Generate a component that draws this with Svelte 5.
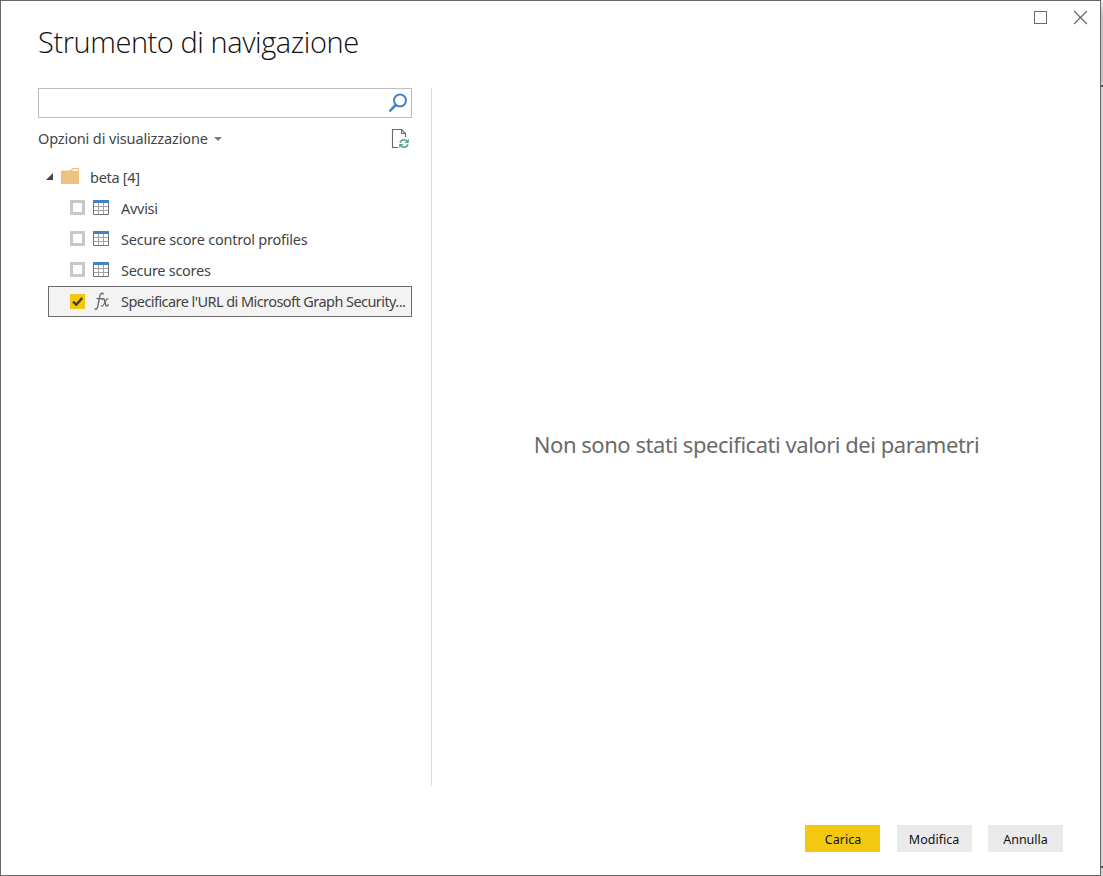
<script>
  let tables = $state([
    { name: 'Avvisi', cls: 'avvisi' },
    { name: 'Secure score control profiles', cls: 'profiles' },
    { name: 'Secure scores', cls: 'scores' }
  ]);
</script>

<div class="screen">
  <main class="dialog">
    <div class="titlebar">
      <h1>Strumento di navigazione</h1>
      <div class="window-buttons">
        <svg width="13" height="13" viewBox="0 0 13 13"><rect x=".5" y=".5" width="12" height="12" fill="none" stroke="#6b6b6b" /></svg>
        <svg width="15" height="15" viewBox="0 0 15 15"><path d="M1 1L14 14M14 1L1 14" fill="none" stroke="#666" stroke-width="1.1" /></svg>
      </div>
    </div>

    <div class="body">
      <section class="navigator">
        <div class="search">
          <svg width="20" height="20" viewBox="0 0 20 20" fill="none" stroke="#4682bd">
            <circle cx="12" cy="7.5" r="6" stroke-width="2" />
            <path d="M7.8 12L2.2 17.6" stroke-width="2.6" stroke-linecap="round" />
          </svg>
        </div>
        <div class="options">
          <span class="label">Opzioni di visualizzazione</span>
          <svg class="caret" width="8" height="4" viewBox="0 0 8 4"><path d="M0 0H8L4 4Z" fill="#777" /></svg>
          <svg class="refresh" width="18" height="20" viewBox="0 0 18 20" fill="none">
            <path d="M7 18.5H1.5V.5H10.5L14.5 4.5V8M10.5 .5V4.5H14.5" stroke="#6a6a6a" stroke-width="1.1" />
            <g stroke="#5aa384" stroke-width="1.7">
              <path d="M9 13.7A4 4 0 0 1 16 12.3" />
              <path d="M17 15.3A4 4 0 0 1 10 16.7" />
            </g>
            <path d="M17.8 9.7V14H13.5ZM8.2 19.3V15H12.5Z" fill="#5aa384" />
          </svg>
        </div>

        <div class="tree">
          <div class="row folder">
            <svg class="expander" width="7" height="7" viewBox="0 0 7 7"><path d="M7 0V7H0Z" fill="#444" /></svg>
            <svg class="folder-icon" width="18" height="16" viewBox="0 0 18 16">
              <path d="M0 2.5H9L11.5 0H18V16H0Z" fill="#eac282" />
              <path d="M10.8 2.7L12.2 1.2H17V2.7Z" fill="#fff" />
            </svg>
            <span class="label beta">beta [4]</span>
          </div>
          {#each tables as table}
            <div class="row">
              <span class="check"></span>
              <svg class="icon" width="16" height="15" viewBox="0 0 16 15">
                <path d="M1 6.5H15M1 10.5H15M5.5 3V14M10.5 3V14" stroke="#a3a3a3" fill="none" />
                <path d="M.5 2V14.5H15.5V2" stroke="#707070" fill="none" />
                <path d="M0 0H16V3H0Z" fill="#4682bd" />
              </svg>
              <span class="label {table.cls}">{table.name}</span>
            </div>
          {/each}
          <div class="row selected">
            <span class="check checked">
              <svg width="15" height="15" viewBox="0 0 15 15"><path d="M3 7.6L6.3 10.7L12.2 4" fill="none" stroke="#413a22" stroke-width="2.3" /></svg>
            </span>
            <svg class="icon fx" width="16" height="19" viewBox="0 0 16 19" fill="none" stroke="#6b6b6b" stroke-linecap="round">
              <path d="M9.2 2.1C8.7 .9 7.2 1 6.4 2.5C5.4 4.5 4.6 11.5 3.6 15C3.1 17 2 17.8 1.1 17" stroke-width="1.4" />
              <path d="M2.8 6.6H8.2" stroke-width="1.1" />
              <path d="M8 7.2C9.5 6 10.2 7 10.7 9L11.5 12.2C12 14.4 13 14.6 14.3 12.9" stroke-width="1.5" />
              <path d="M14.2 7C12.5 6 11.5 8.8 10.7 10.6C9.8 12.8 8.6 14.7 7.3 13.8" stroke-width="1.1" />
            </svg>
            <span class="label specify">Specificare l'URL di Microsoft Graph Security...</span>
          </div>
        </div>
      </section>

      <section class="preview"><p>Non sono stati specificati valori dei parametri</p></section>
    </div>

    <footer>
      <button class="primary">Carica</button>
      <button class="edit">Modifica</button>
      <button>Annulla</button>
    </footer>
  </main>
  <aside class="backdrop"><i></i><b></b><i></i></aside>
</div>

<style>
  .screen { display: flex; width: 1103px; height: 876px; overflow: hidden; font-family: "Noto Sans", "Open Sans", sans-serif; color: #444; }
  .dialog { box-sizing: border-box; display: flex; flex-direction: column; width: 1101px; height: 876px; border: 1px solid #666; background: #fff; }
  .titlebar { display: flex; justify-content: space-between; height: 87px; padding: 0 12px 0 37px; }
  h1 { margin: 20px 0 0; font-family: "Open Sans", sans-serif; font-size: 29px; line-height: 42px; font-weight: 300; letter-spacing: -.43px; color: #111; white-space: nowrap; }
  .window-buttons { display: flex; align-items: flex-start; gap: 26px; padding-top: 10px; }
  .window-buttons svg:last-child { margin-top: -1px; }
  .body { display: flex; height: 698px; padding-left: 37px; }
  .navigator { width: 374px; flex: none; }
  .search { box-sizing: border-box; display: flex; justify-content: flex-end; align-items: center; height: 30px; padding-right: 3px; border: 1px solid #bdbdbd; }
  .options { display: flex; align-items: center; height: 42px; }
  .label { padding-bottom: 2px; font-size: 14.5px; line-height: 20px; white-space: nowrap; }
  .options .label { letter-spacing: -.13px; }
  .caret { margin: 0 0 1px 6px; }
  .refresh { margin: 0 3px 0 auto; }
  .tree { padding: 1px 0 0 10px; }
  .row { box-sizing: border-box; display: flex; align-items: center; height: 31px; padding-left: 22px; }
  .row .label { padding-bottom: 0; letter-spacing: -.28px; }
  .folder { padding-left: 0; }
  .expander { margin: 0 8px 0 -2px; }
  .folder-icon { margin: 0 11px 1px 0; }
  .check { box-sizing: border-box; width: 15px; height: 15px; flex: none; border: 3px solid #c8c8c8; background: #fff; }
  .check.checked { border: 0; background: #f2c811; display: flex; }
  .icon { flex: none; margin: 0 12px 0 8px; }
  .icon.fx { margin-left: 9px; margin-right: 11px; }
  .row .profiles { letter-spacing: -.22px; }
  .selected { margin-top: 1px; padding-left: 21px; border: 1px solid #6b6b6b; background: #f3f3f3; }
  .row .specify { padding-bottom: 2px; letter-spacing: -.56px; }
  .preview { box-sizing: border-box; display: flex; flex: 1; align-items: center; justify-content: center; margin: 0 19px; border-left: 1px solid #ddd; }
  .preview p { margin: 0; padding-top: 14px; font-size: 22px; line-height: 30px; letter-spacing: -.46px; color: #6b6b6b; white-space: nowrap; }
  footer { display: flex; justify-content: flex-end; gap: 16px; padding: 39px 37px 0 0; }
  button { box-sizing: border-box; width: 75px; height: 27px; padding: 2px 0 0; border: 0; border-radius: 0; background: #eaeaea; color: #111; font: 12.5px/20px "Noto Sans", sans-serif; }
  button.primary { background: #f2c811; margin-right: 1px; }
  button.primary { padding-left: 1px; }
  button.edit { padding-right: 1px; }
  .backdrop { display: flex; flex-direction: column; width: 2px; background: linear-gradient(#f2f2f2, #c4c4c4 14px, #c4c4c4 82px, #d4d4d4 83px); }
  .backdrop i { height: 2px; margin-top: 85px; background: #555; }
  .backdrop b { flex: 1; }
  .backdrop i:last-child { margin: 0 0 8px; }
</style>
